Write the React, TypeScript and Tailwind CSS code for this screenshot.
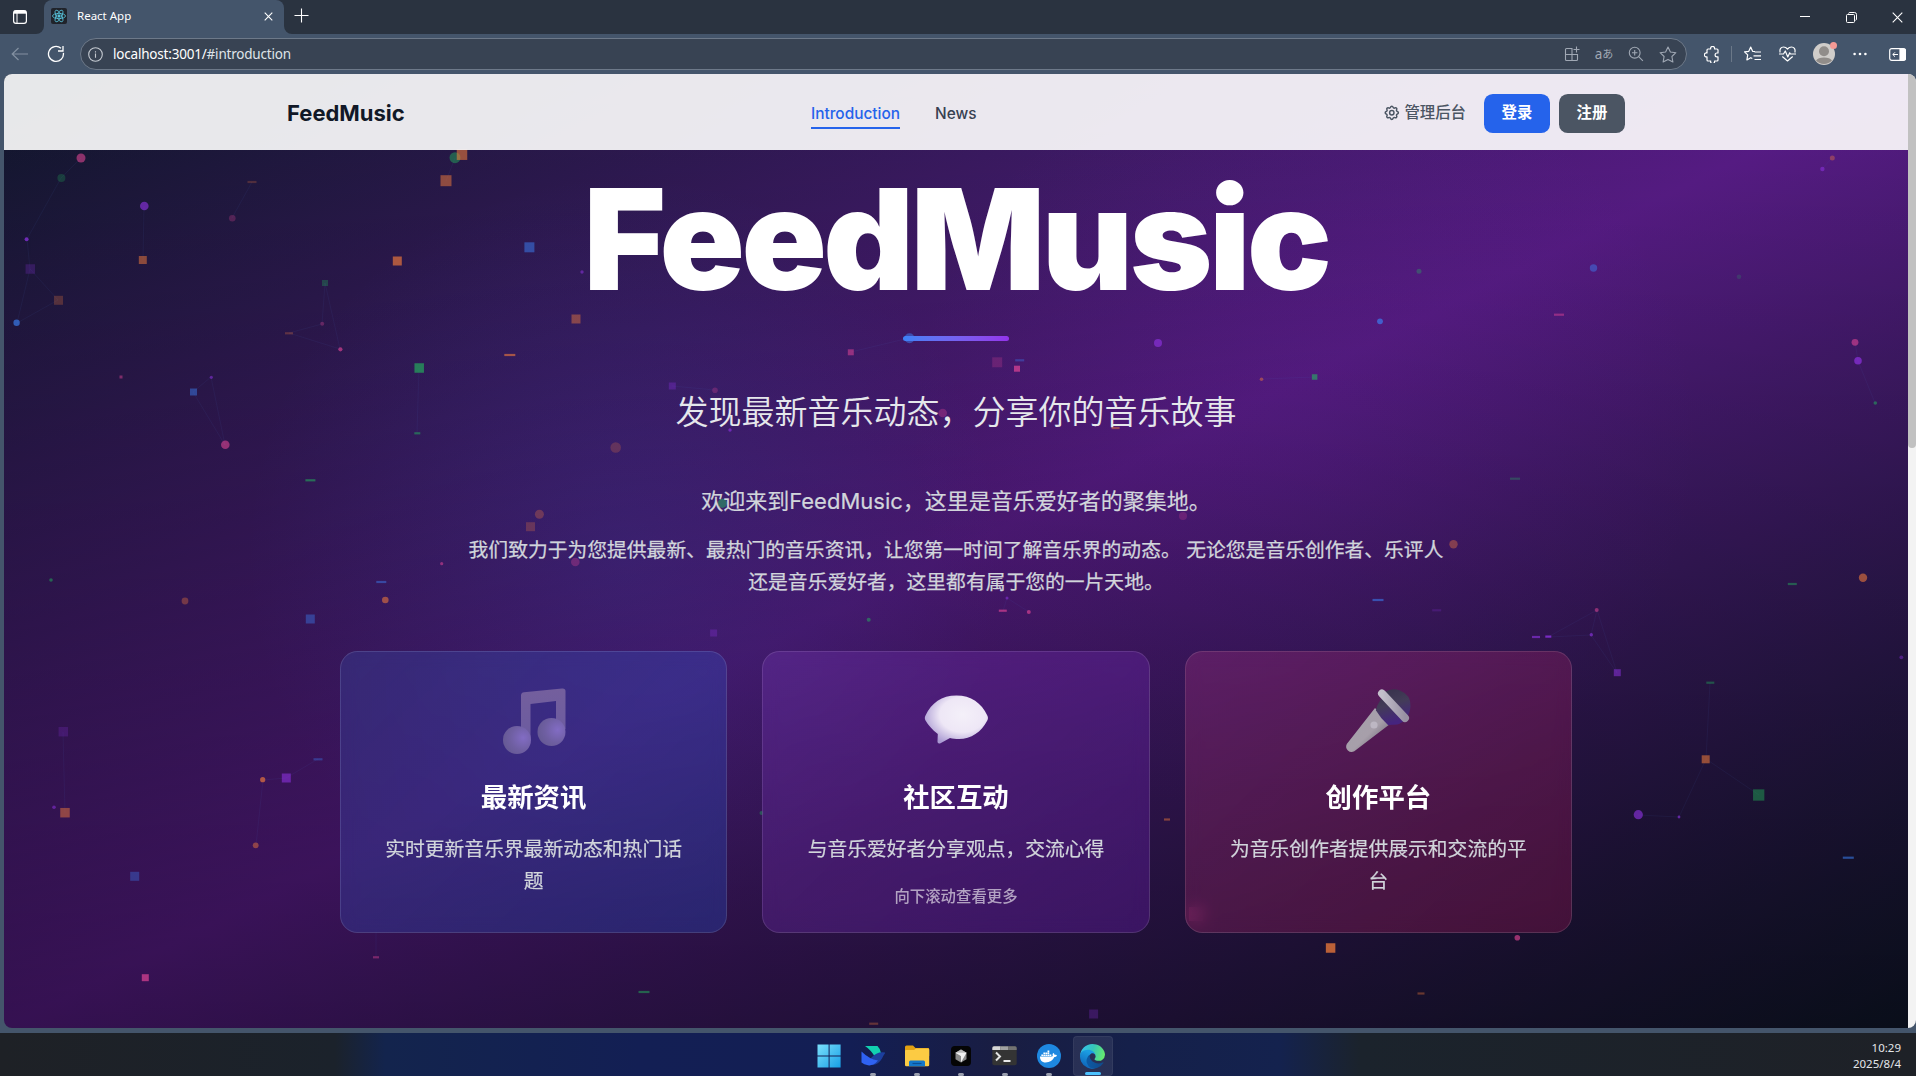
import React from "react";
import { FaDocker } from "react-icons/fa";
import { HiOutlineCog } from "react-icons/hi";

type Shape = "c" | "s" | "d";
type Particle = [Shape, number, number, number, keyof typeof palette, number];

const palette = {
  pink: "#ec4899",
  green: "#22c55e",
  purple: "#9333ea",
  orange: "#f97f3a",
  blue: "#3b82f6",
};

/* shape (circle, square, dash), centre x, centre y, radius or width, colour, opacity */
const particles: Particle[] = [
  ["c", 81, 158, 4.5, "pink", 0.55],
  ["c", 61.4, 178, 4, "green", 0.25],
  ["c", 144.3, 206, 4.3, "purple", 0.6],
  ["d", 252, 182, 9, "orange", 0.25],
  ["c", 232.3, 218.3, 3.3, "pink", 0.25],
  ["c", 455, 157.7, 5.5, "green", 0.45],
  ["s", 462, 154.7, 10.5, "orange", 0.6],
  ["s", 446, 180.7, 11, "orange", 0.55],
  ["c", 26.6, 239.3, 2, "purple", 0.7],
  ["s", 30.3, 269, 9.5, "purple", 0.22],
  ["s", 142.8, 260, 8, "orange", 0.55],
  ["s", 58.5, 300.3, 9, "orange", 0.28],
  ["c", 16.6, 322.7, 3.2, "blue", 0.65],
  ["s", 397.3, 261, 9, "orange", 0.7],
  ["s", 529.4, 247.3, 10, "blue", 0.5],
  ["s", 325, 283, 6, "green", 0.3],
  ["c", 322.2, 323.7, 2, "pink", 0.3],
  ["d", 289, 333.3, 8, "orange", 0.3],
  ["c", 340.4, 349.3, 2.1, "pink", 0.6],
  ["s", 576, 319, 9, "orange", 0.48],
  ["d", 509.8, 355, 11, "orange", 0.65],
  ["s", 419.2, 368, 9.5, "green", 0.65],
  ["s", 121, 377, 3, "pink", 0.45],
  ["c", 211.3, 377.3, 1.6, "purple", 0.5],
  ["s", 193.5, 392, 7, "blue", 0.45],
  ["d", 417.3, 433.3, 6, "green", 0.5],
  ["c", 225.3, 444.7, 4.3, "pink", 0.55],
  ["d", 310.4, 480.3, 10, "green", 0.55],
  ["c", 539.4, 514.3, 4.5, "orange", 0.32],
  ["s", 530.5, 526.7, 9, "orange", 0.28],
  ["c", 441.7, 563.7, 1.6, "pink", 0.5],
  ["c", 575.3, 562, 4.3, "pink", 0.3],
  ["c", 51, 580, 1.8, "green", 0.5],
  ["s", 850.8, 352.3, 6, "pink", 0.5],
  ["c", 909.5, 338.3, 5, "blue", 0.5],
  ["s", 997.2, 362.3, 10, "pink", 0.22],
  ["d", 1019.7, 360.3, 9, "blue", 0.35],
  ["s", 1017, 368.7, 6, "pink", 0.65],
  ["c", 1158, 343, 4, "purple", 0.6],
  ["s", 1314.6, 377, 5.5, "green", 0.6],
  ["c", 1261.5, 379.3, 1.8, "orange", 0.5],
  ["c", 582, 272, 1.7, "purple", 0.5],
  ["s", 672.3, 386, 7, "purple", 0.3],
  ["c", 715, 390.3, 2.8, "pink", 0.25],
  ["c", 615.7, 447.5, 5.3, "orange", 0.25],
  ["c", 942.7, 413, 4.3, "pink", 0.3],
  ["d", 1115.6, 428, 8, "orange", 0.5],
  ["c", 730, 430, 1.7, "purple", 0.6],
  ["c", 722.4, 503.3, 4.6, "green", 0.5],
  ["c", 1183, 516, 4, "pink", 0.22],
  ["c", 1453.5, 544.3, 4.2, "orange", 0.42],
  ["d", 1378, 600, 11, "blue", 0.55],
  ["d", 1436.7, 610.3, 9, "purple", 0.2],
  ["d", 1002.8, 610.7, 8, "pink", 0.6],
  ["c", 1028.8, 612, 2, "pink", 0.6],
  ["c", 1007, 598, 1.5, "purple", 0.5],
  ["c", 868.7, 619.7, 2, "green", 0.5],
  ["c", 817, 553, 2, "orange", 0.4],
  ["s", 713.6, 633, 7, "purple", 0.28],
  ["c", 1832.3, 158, 2.5, "orange", 0.4],
  ["c", 1822.4, 169, 2.2, "purple", 0.5],
  ["c", 1419, 271.3, 2.5, "green", 0.35],
  ["c", 1593.5, 268, 3.7, "blue", 0.45],
  ["c", 1380, 321.3, 2.9, "blue", 0.65],
  ["d", 1559, 314.7, 10, "pink", 0.45],
  ["c", 1739, 276.7, 2.3, "green", 0.2],
  ["c", 1855, 342.3, 3.4, "pink", 0.55],
  ["c", 1858, 360.7, 3.8, "purple", 0.65],
  ["c", 1875.3, 403, 1.8, "green", 0.5],
  ["d", 1515, 478.7, 10, "green", 0.32],
  ["c", 1863, 577.7, 4.2, "orange", 0.62],
  ["c", 185, 601, 3.4, "orange", 0.38],
  ["c", 385.3, 600, 3.3, "orange", 0.6],
  ["d", 381.3, 582, 10, "blue", 0.45],
  ["s", 310.3, 619, 9, "blue", 0.4],
  ["s", 63.3, 731.7, 9.5, "purple", 0.2],
  ["c", 54, 807.3, 1.8, "purple", 0.5],
  ["s", 65, 812.7, 9.5, "orange", 0.52],
  ["s", 286.3, 778, 9, "purple", 0.55],
  ["c", 262.7, 779.7, 2.6, "orange", 0.7],
  ["d", 318, 759.3, 9, "blue", 0.35],
  ["c", 255.7, 845.3, 2.9, "orange", 0.5],
  ["s", 134.7, 876.3, 9, "blue", 0.35],
  ["d", 376, 957.3, 6, "pink", 0.4],
  ["s", 145.3, 977.7, 7, "pink", 0.65],
  ["d", 1792.3, 584, 9, "green", 0.45],
  ["c", 1596.7, 610, 2, "pink", 0.5],
  ["d", 1536, 637, 8, "purple", 0.6],
  ["d", 1548.3, 636.6, 6, "purple", 0.75],
  ["c", 1591.3, 634.7, 1.7, "purple", 0.6],
  ["s", 1617.3, 672.7, 7, "purple", 0.5],
  ["d", 1710.3, 682.7, 8, "green", 0.4],
  ["c", 1901.3, 657.3, 1.9, "purple", 0.4],
  ["s", 1705.7, 759.3, 8, "orange", 0.6],
  ["s", 1758.7, 795, 11.3, "green", 0.45],
  ["c", 1638.3, 814.7, 4.6, "purple", 0.6],
  ["c", 1679, 817, 1.4, "purple", 0.6],
  ["d", 1848.3, 857.7, 11, "blue", 0.55],
  ["c", 1517.3, 937.7, 2.8, "pink", 0.6],
  ["s", 1330.6, 948, 9.5, "orange", 0.8],
  ["d", 644, 992, 11, "green", 0.5],
  ["d", 873.7, 1023.7, 9, "orange", 0.35],
  ["s", 1093.6, 1014, 9, "purple", 0.25],
  ["d", 1421, 993.5, 7, "orange", 0.4],
  ["d", 1167, 819.5, 6, "orange", 0.5],
  ["c", 761.5, 813, 2, "green", 0.4],
  ["s", 1196, 914, 14, "pink", 0.28],
];

const links: [number, number, number, number][] = [
  [81, 158, 61, 178], [61, 178, 27, 239], [27, 239, 30, 269], [30, 269, 58, 300],
  [30, 269, 17, 323], [58, 300, 17, 323], [144, 206, 143, 260], [252, 182, 232, 218],
  [455, 158, 446, 181], [325, 283, 322, 324], [325, 283, 340, 349], [322, 324, 289, 333],
  [289, 333, 340, 349], [211, 377, 193, 392], [193, 392, 225, 445], [211, 377, 225, 445],
  [419, 368, 417, 433], [286, 778, 318, 759], [263, 780, 286, 778], [263, 780, 256, 845],
  [63, 732, 65, 813], [376, 957, 376, 930], [851, 352, 909, 338], [672, 386, 715, 390],
  [1262, 379, 1315, 377], [1003, 611, 1007, 598], [1007, 598, 1029, 612],
  [1832, 158, 1822, 169], [1855, 342, 1858, 361], [1858, 361, 1875, 403],
  [1548, 637, 1591, 635], [1591, 635, 1597, 610], [1597, 610, 1548, 637],
  [1591, 635, 1617, 673], [1597, 610, 1617, 673], [1706, 759, 1759, 795],
  [1706, 759, 1679, 817], [1638, 815, 1679, 817], [1710, 683, 1706, 759],
];

function ParticleField() {
  return (
    <svg className="pointer-events-none absolute inset-0 h-full w-full" viewBox="4 74 1904 954">
      {links.map(([a, b, c, d], i) => (
        <line key={i} x1={a} y1={b} x2={c} y2={d} stroke="#4f7bd9" strokeWidth="0.8" opacity="0.09" />
      ))}
      {particles.map(([shape, x, y, s, color, o], i) => {
        const fade = color === "orange" || color === "green" ? o * 0.9 : o;
        if (shape === "c") return <circle key={i} cx={x} cy={y} r={s} fill={palette[color]} opacity={fade} />;
        const h = shape === "s" ? s : 2.2;
        return <rect key={i} x={x - s / 2} y={y - h / 2} width={s} height={h} fill={palette[color]} opacity={fade} />;
      })}
    </svg>
  );
}

function TitleBar() {
  return (
    <div className="flex h-[34px] shrink-0 items-stretch bg-[#2a3340] text-white">
      <div className="flex w-[44px] items-center pl-[13px]">
        <svg width="14" height="14" viewBox="0 0 14 14" fill="none" stroke="white" strokeWidth="1.2">
          <rect x="0.6" y="0.6" width="12.8" height="12.8" rx="2.4" />
          <path d="M1 2.2h12" strokeWidth="3" />
          <path d="M4 3v10" strokeWidth="1" />
        </svg>
      </div>
      <div className="relative flex w-[240px] items-center rounded-t-[8px] bg-[#44556b] pb-0.5 pl-[7px] pr-[11px]">
        <svg className="absolute -left-2 bottom-0" width="8" height="8" viewBox="0 0 8 8">
          <path d="M8 0v8H0A8 8 0 0 0 8 0z" fill="#44556b" />
        </svg>
        <svg className="absolute -right-2 bottom-0" width="8" height="8" viewBox="0 0 8 8">
          <path d="M0 0v8h8A8 8 0 0 1 0 0z" fill="#44556b" />
        </svg>
        <svg width="16" height="16" viewBox="0 0 16 16" fill="none" stroke="#58c4dc" strokeWidth="0.8">
          <rect width="16" height="16" rx="2" fill="#20232a" stroke="none" />
          <circle cx="8" cy="8" r="1.2" fill="#58c4dc" />
          <ellipse cx="8" cy="8" rx="6.5" ry="2.6" />
          <ellipse cx="8" cy="8" rx="6.5" ry="2.6" transform="rotate(60 8 8)" />
          <ellipse cx="8" cy="8" rx="6.5" ry="2.6" transform="rotate(120 8 8)" />
        </svg>
        <span className="ml-[10px] flex-1 text-[11.5px] leading-4">React App</span>
        <svg width="9" height="9" viewBox="0 0 9 9" stroke="white" strokeWidth="1.1">
          <path d="M.7.7l7.6 7.6M8.3.7L.7 8.3" />
        </svg>
      </div>
      <div className="flex flex-1 items-center pb-[3px] pl-[10px]">
        <svg width="15" height="15" viewBox="0 0 15 15" stroke="white" strokeWidth="1.1">
          <path d="M7.5.5v14M.5 7.5h14" />
        </svg>
      </div>
      <div className="flex items-center gap-[35.5px] pr-[13px]">
        <svg width="10" height="10" viewBox="0 0 10 10" stroke="white">
          <path d="M0 4.5h10" />
        </svg>
        <svg width="11" height="11" viewBox="0 0 11 11" fill="none" stroke="white">
          <rect x=".5" y="2.5" width="8" height="8" rx="1" />
          <path d="M2.5 1.5q.2-1 1.4-1H8.5q2 0 2 2V7q0 1-1 1.4" />
        </svg>
        <svg width="11" height="11" viewBox="0 0 11 11" stroke="white" strokeWidth="1.1">
          <path d="M.7.7l9.6 9.6M10.3.7L.7 10.3" />
        </svg>
      </div>
    </div>
  );
}

function Toolbar() {
  return (
    <div className="flex h-[40px] shrink-0 items-center bg-[#44556b] pl-[11px] pr-[10px] text-white">
      <svg width="18" height="14" viewBox="0 0 18 14" fill="none" stroke="#8390a1" strokeWidth="1.2">
        <path d="M17 7H1.5M7.500 1L1.200 7l6.300 6" />
      </svg>
      <svg className="ml-[18px]" width="18" height="18" viewBox="0 0 18 18" fill="none" stroke="white" strokeWidth="1.3">
        <path d="M16.4 7.8A7.5 7.5 0 1 1 14 3.3M16 1v5h-5" />
      </svg>
      <div className="ml-[15px] flex h-8 flex-1 items-center rounded-full border border-[#6d7989] bg-[#384353] pl-[7px] pr-[9px]">
        <svg width="15" height="15" viewBox="0 0 15 15" fill="none" stroke="#c5cad1" strokeWidth="1.1">
          <circle cx="7.5" cy="7.5" r="6.8" />
          <path d="M7.5 6.6v4.2M7.5 4.2v1.3" />
        </svg>
        <span className="ml-[10px] flex-1 text-[13.5px] leading-5 tracking-[-0.2px]">
          localhost:3001/<span className="text-[#dfe3e8]">#introduction</span>
        </span>
        <div className="flex items-center gap-[15px] text-[#a0a8b4]">
          <svg width="16" height="16" viewBox="0 0 16 16" fill="none" stroke="currentColor" strokeWidth="1.1">
            <path d="M8.500 2.500H2.500q-1 0-1 1v10q0 1 1 1h10q1 0 1-1V8.500H1.500M8 2.500v12M12.500 .5v6M9.500 3.500h6" />
          </svg>
          <span className="flex w-[18px] items-center justify-center whitespace-nowrap text-[13.5px] leading-4">
            a<span className="text-[11px]">あ</span>
          </span>
          <svg width="16" height="16" viewBox="0 0 16 16" fill="none" stroke="currentColor" strokeWidth="1.1">
            <circle cx="6.7" cy="6.7" r="5.4" />
            <path d="M10.7 10.7l4.2 4.2M6.7 4v5.4M4 6.7h5.4" />
          </svg>
          <svg width="18" height="17" viewBox="0 0 18 17" fill="none" stroke="currentColor" strokeWidth="1.1" strokeLinejoin="round">
            <path d="M9 1l2.4 5 5.5.7-4 3.8 1 5.5L9 13.4 4.100 16l1-5.500-4-3.800 5.500-.7z" />
          </svg>
        </div>
      </div>
      <svg className="ml-[17px]" width="16" height="17" viewBox="0 0 16 17" fill="none" stroke="white" strokeWidth="1.2" strokeLinejoin="round">
        <path d="M4 3h2.700a2 2 0 1 1 3.800 0H13q1 0 1 1v3h-1a1.900 1.900 0 1 0 0 3.800h1V14q0 1-1 1h-2.500a2 2 0 1 1-3.800 0H4q-1 0-1-1v-3.200a2 2 0 1 1 0-3.800V4q0-1 1-1z" />
      </svg>
      <div className="ml-[11px] h-4 w-px bg-[#6b7888]" />
      <svg className="ml-[12px]" width="17" height="17" viewBox="0 0 17 17" fill="none" stroke="white" strokeWidth="1.2" strokeLinejoin="round">
        <path d="M11 5.500l-2.400-.2L6.700 1 4.800 5.300l-4.300.6 3.200 3-.8 5 3.800-2.200 1.600.9M10.500 6H17M9.500 9.800H17M10.500 13.500H17" />
      </svg>
      <svg className="ml-[18px]" width="17" height="16" viewBox="0 0 17 16" fill="none" stroke="white" strokeWidth="1.2" strokeLinejoin="round">
        <path d="M1.200 6.500C.2 3 2.200 1 4.500 1c1.700 0 3 .8 4 2 1-1.200 2.300-2 4-2 2.300 0 4.300 2 3.300 5.500M3.300 10.500L8.500 15l5.200-4.500M0 8h4.500l1.800-3 2.500 6 1.900-4.200.8 1.200H17" />
      </svg>
      <div className="relative ml-[17px] h-[22px] w-[22px]">
        <svg width="22" height="22" viewBox="0 0 22 22">
          <circle cx="11" cy="11" r="11" fill="#d0cdca" />
          <circle cx="11" cy="8.200" r="5" fill="#918d8a" />
          <path d="M3 17.500q2-3 8-3t8 3a11 11 0 0 1-16 0z" fill="#918d8a" />
        </svg>
        <div className="absolute -right-[2px] -top-[1px] h-[7px] w-[7px] rounded-full bg-[#f59a95]" />
      </div>
      <svg className="ml-[18px]" width="14" height="4" viewBox="0 0 14 4" fill="white">
        <circle cx="1.600" cy="2" r="1.300" />
        <circle cx="7" cy="2" r="1.300" />
        <circle cx="12.400" cy="2" r="1.300" />
      </svg>
      <svg className="ml-[22px]" width="17" height="13" viewBox="0 0 17 13" fill="none" stroke="white" strokeWidth="1.200">
        <rect x=".7" y=".7" width="15.600" height="11.600" rx="2" />
        <path d="M11 1h4q1.500 0 1.500 1.500v8Q16.500 12 15 12h-4z" fill="white" />
        <path d="M9 6.500H4M6 4.300L3.800 6.500 6 8.700" strokeWidth="1" />
      </svg>
    </div>
  );
}

function SiteHeader() {
  return (
    <header className="relative z-10 h-[76px] bg-white/90 pt-[2px]">
      <div className="mx-auto flex h-full w-[1338px] items-center justify-between">
        <div className="w-[524px] text-[22px] font-bold text-[#111827]">FeedMusic</div>
        <nav className="flex flex-1 gap-[35px] text-[15.4px] font-medium leading-[22px]">
          <a className="border-b-2 border-[#2563eb] pb-[2px] pt-[6px] text-[#2563eb]">Introduction</a>
          <a className="pb-[4px] pt-[6px] text-[#374151]">News</a>
        </nav>
        <div className="flex items-center text-[15.4px]">
          <span className="flex items-center gap-[4px] font-medium text-[#4b5563]">
            <HiOutlineCog size={17.6} />
            管理后台
          </span>
          <button className="ml-[18px] h-[39px] w-[66px] rounded-[8.8px] bg-[#2563eb] font-bold text-white">登录</button>
          <button className="ml-[9px] h-[39px] w-[66px] rounded-[8.8px] bg-[#4b5563] font-bold text-white">注册</button>
        </div>
      </div>
    </header>
  );
}

function MusicNote() {
  return (
    <svg width="66" height="70" viewBox="0 0 66 70">
      <defs>
        <radialGradient id="noteA" cx="0.72" cy="0.42" r="0.75">
          <stop offset="0" stopColor="#826cc4" />
          <stop offset="0.6" stopColor="#6f5fa2" />
          <stop offset="1" stopColor="#655993" />
        </radialGradient>
        <linearGradient id="noteB" x1="0" y1="0" x2="0" y2="1">
          <stop offset="0" stopColor="#745f9d" />
          <stop offset="1" stopColor="#6b5ba0" />
        </linearGradient>
      </defs>
      <path d="M20 8.500q0-3 3-3.300L61 1.500q3.500-.3 3.500 2.500V42H55V14L29.500 17v36H20z" fill="url(#noteB)" />
      <circle cx="16" cy="53" r="14" fill="url(#noteA)" />
      <circle cx="50.500" cy="45" r="14" fill="url(#noteA)" />
    </svg>
  );
}

function SpeechBubble() {
  return (
    <svg width="66" height="70" viewBox="0 0 66 70">
      <defs>
        <radialGradient id="bubble" cx="0.6" cy="0.4" r="0.66">
          <stop offset="0" stopColor="#f4f0f9" />
          <stop offset="0.55" stopColor="#eee7f6" />
          <stop offset="1" stopColor="#a999d2" />
        </radialGradient>
      </defs>
      <path
        d="M33.500 8.500C48 8.500 58.500 16 64.300 28.500c.9 2 .9 3 0 5C58.500 45 48 52 36 52c-3.500 0-6.500-.3-9-1l-9.500 5.300c-2 .8-3.200 0-3-2.200l.3-7.100C9 42.500 5.300 38 2.500 33.500c-.9-2-.9-3 0-5C8.500 16 18.500 8.500 33.500 8.500z"
        fill="url(#bubble)"
      />
    </svg>
  );
}

function Microphone() {
  return (
    <svg width="66" height="70" viewBox="0 0 66 70">
      <defs>
        <linearGradient id="micBody" x1="0" y1="0" x2="1" y2="1">
          <stop offset="0.2" stopColor="#a5a0ab" />
          <stop offset="0.55" stopColor="#a79faa" />
          <stop offset="0.8" stopColor="#77707f" />
        </linearGradient>
        <linearGradient id="micBall" x1="0" y1="0" x2="0.3" y2="1">
          <stop offset="0" stopColor="#35304a" />
          <stop offset="0.5" stopColor="#433c58" />
          <stop offset="1" stopColor="#45247f" />
        </linearGradient>
        <linearGradient id="micRing" x1="0" y1="0" x2="1" y2="0">
          <stop offset="0" stopColor="#c3bfcb" />
          <stop offset="1" stopColor="#9891a3" />
        </linearGradient>
      </defs>
      <path d="M30 21L1.800 57a5.500 5.500 0 0 0 7.500 7.300L45 37z" fill="url(#micBody)" />
      <circle cx="29" cy="38" r="3.600" fill="#bdb7c3" />
      <path d="M32 19L40 5q7-4.500 15-1.500Q66 8 65.500 19q-1 14-13 18.500L43 38q-7-6-12-14.500z" fill="url(#micBall)" />
      <path d="M37 6.500L60 31" stroke="url(#micRing)" strokeWidth="8" strokeLinecap="round" />
    </svg>
  );
}

const cards = [
  {
    icon: <MusicNote />,
    title: "最新资讯",
    text: "实时更新音乐界最新动态和热门话题",
    className: "bg-[linear-gradient(135deg,rgba(59,130,246,0.17),rgba(37,99,235,0.25))]",
  },
  {
    icon: <SpeechBubble />,
    title: "社区互动",
    text: "与音乐爱好者分享观点，交流心得",
    className: "bg-[linear-gradient(135deg,rgba(168,85,247,0.18),rgba(126,34,206,0.28))]",
  },
  {
    icon: <Microphone />,
    title: "创作平台",
    text: "为音乐创作者提供展示和交流的平台",
    className: "bg-[linear-gradient(135deg,rgba(236,72,153,0.2),rgba(190,24,93,0.27))]",
  },
];

function Hero() {
  return (
    <main className="relative flex flex-col items-center text-center">
      <h1 className="mt-[19px] text-[140.8px] font-black leading-[140.8px] tracking-[-0.025em] text-white">FeedMusic</h1>
      <div className="mt-[26px] h-[5px] w-[106px] rounded-full bg-linear-to-r from-[#3b82f6] to-[#9333ea]" />
      <p className="mt-[49px] text-[33px] font-[350] leading-[45px] text-[#e5e7eb]">发现最新音乐动态，分享你的音乐故事</p>
      <p className="mt-[48px] text-[22px] leading-[36px] text-[#d1d5db] [-webkit-text-stroke:0.2px_#d1d5db]">
        欢迎来到FeedMusic，这里是音乐爱好者的聚集地。
      </p>
      <p className="mt-[15px] text-[19.8px] leading-[32.2px] text-[#d1d5db] [-webkit-text-stroke:0.25px_#d1d5db]">
        我们致力于为您提供最新、最热门的音乐资讯，让您第一时间了解音乐界的动态。 无论您是音乐创作者、乐评人
        <br />
        还是音乐爱好者，这里都有属于您的一片天地。
      </p>
      <div className="relative mt-[53px] grid w-[1232px] grid-cols-3 gap-[35.2px]">
        {cards.map((card) => (
          <section
            key={card.title}
            className={`flex h-[282px] flex-col items-center rounded-[17.6px] border border-white/12 px-[35px] pt-[35px] backdrop-blur-[8px] ${card.className}`}
          >
            <div className="flex h-[70px] items-center">{card.icon}</div>
            <h2 className="mt-[23px] text-[26.4px] font-bold leading-[35px] text-white">{card.title}</h2>
            <p className="mt-[18px] text-[19.8px] leading-[32.2px] text-[#d1d5db] [-webkit-text-stroke:0.2px_#d1d5db]">
              {card.text}
            </p>
          </section>
        ))}
        <div className="absolute inset-x-0 bottom-[25px] text-[15.4px] font-medium leading-[22px] text-white/60">向下滚动查看更多</div>
      </div>
    </main>
  );
}

function Page() {
  return (
    <div className="flex h-[959px] shrink-0 bg-[#44556b] pb-[5px] pl-1">
      <div className="relative w-[1904px] overflow-hidden rounded-l-[8px] bg-[linear-gradient(to_bottom,rgba(0,0,0,0),rgba(0,0,0,0.4)),radial-gradient(circle_at_620px_480px,rgba(59,110,246,0.15),transparent_380px),radial-gradient(circle_at_1300px_360px,rgba(147,51,234,0.09),transparent_400px),linear-gradient(to_bottom_right,#0f172a,#581c87,#0f172a)]">
        <ParticleField />
        <SiteHeader />
        <Hero />
      </div>
      <div className="flex-1 overflow-hidden rounded-r-[8px] bg-[#f3f3f3]">
        <div className="h-[374px] rounded-b-[4px] bg-[#c1c1c1]" />
      </div>
    </div>
  );
}

function WindowsLogo() {
  return (
    <svg width="24" height="24" viewBox="0 0 24 24">
      <defs>
        <linearGradient id="win" x1="0" y1="0" x2="1" y2="1">
          <stop offset="0" stopColor="#7be0fb" />
          <stop offset="1" stopColor="#179fe6" />
        </linearGradient>
      </defs>
      <path d="M.5.5h11.100v11.100H.5zM12.600.5h11v11.100h-11zM.5 12.500h11.100v11H.5zM12.600 12.500h11v11h-11z" fill="url(#win)" />
    </svg>
  );
}

function LarkLogo() {
  return (
    <svg width="24" height="24" viewBox="0 0 24 24">
      <path d="M4 2h12.500q3 3 3.500 7l-6 4Q10 6 4 2z" fill="#12d0b0" />
      <path d="M10 14q6-7 14.500-5.500-2 2.500-3.500 6-3.500 6-10 6.500z" fill="#1c3f9e" />
      <path d="M.5 7.500Q8 15 17 16.500q-4.500 5.500-10 4.800Q3 20.700.5 18.500z" fill="#2f62f2" />
    </svg>
  );
}

function FolderLogo() {
  return (
    <svg width="26" height="24" viewBox="0 0 26 24">
      <path d="M1 3q0-1.500 1.500-1.500H9l2.500 2.500H24q1.200 0 1.200 1.200V12H1z" fill="#e3a112" />
      <path d="M1 7q0-1 1-1h8l2-1.500h12q1.200 0 1.200 1.200V21q0 1.200-1.200 1.200H2.200Q1 22.200 1 21z" fill="#fccb43" />
      <path d="M5 22.200V18q0-1.500 1.500-1.500h13q1.500 0 1.500 1.500v4.200z" fill="#1477c9" />
      <path d="M8.500 19.500h9" stroke="#0b4f94" strokeWidth="1.200" />
    </svg>
  );
}

function CubeLogo() {
  return (
    <svg width="20" height="20" viewBox="0 0 20 20">
      <rect width="20" height="20" rx="4" fill="#050505" />
      <path d="M10 3.500l5.500 3.200v6.600L10 16.500l-5.500-3.200V6.700z" fill="#8a8a8a" />
      <path d="M4.500 6.700L10 3.500l5.500 3.200L10 10z" fill="#bcbcbc" />
      <path d="M4.500 6.700h11L10 16.500V10z" fill="#f2f2f2" />
    </svg>
  );
}

function TerminalLogo() {
  return (
    <svg width="25" height="20" viewBox="0 0 25 20">
      <rect x=".3" y=".3" width="24.400" height="19" rx="1.800" fill="#343434" />
      <path d="M.3 4V2Q.3.300 2 .3h6.500V4z" fill="#d6d6d6" />
      <path d="M8.500.300h8V4h-8z" fill="#a2a2a2" />
      <path d="M16.500.300H23q1.700 0 1.700 1.700v2h-8.200z" fill="#737373" />
      <path d="M4 6.500l4 4-4 4" fill="none" stroke="#e4e4e4" strokeWidth="2" />
      <path d="M11.500 15h7" stroke="white" strokeWidth="1.800" />
    </svg>
  );
}

function EdgeLogo() {
  return (
    <svg width="25" height="25" viewBox="0 0 256 256">
      <defs>
        <linearGradient id="edgeBase" x1="0.1" y1="0.5" x2="1" y2="0.6">
          <stop offset="0" stopColor="#0c59a4" />
          <stop offset="1" stopColor="#114a8b" />
        </linearGradient>
        <linearGradient id="edgeMid" x1="0.6" y1="0.2" x2="0.3" y2="1">
          <stop offset="0" stopColor="#1b9de2" />
          <stop offset="1" stopColor="#0d5fb6" />
        </linearGradient>
        <linearGradient id="edgeTop" x1="0" y1="0.3" x2="1" y2="0.5">
          <stop offset="0" stopColor="#35c1f1" />
          <stop offset="0.5" stopColor="#36c6b8" />
          <stop offset="1" stopColor="#66eb6e" />
        </linearGradient>
      </defs>
      <path d="M235 188a94 94 0 0 1-11 5 102 102 0 0 1-36 6c-47 0-89-33-89-75a32 32 0 0 1 17-27c-43 2-54 47-54 73 0 74 68 82 83 82 8 0 20-2 27-5h2a128 128 0 0 0 66-53c2-4-2-8-5-6z" fill="url(#edgeBase)" />
      <path d="M106 241a79 79 0 0 1-23-21 81 81 0 0 1 30-121c3-2 8-4 15-4a32 32 0 0 1 25 13 32 32 0 0 1 6 18c0-1 25-79-80-79-44 0-80 42-79 78a130 130 0 0 0 12 56 128 128 0 0 0 156 67 75 75 0 0 1-62-7z" fill="url(#edgeMid)" />
      <path d="M152 149c-1 1-3 2-3 6 0 3 2 5 5 8 14 10 42 9 42 9a60 60 0 0 0 30-9 61 61 0 0 0 30-52c0-22-8-37-11-43C225 28 182 0 128 0A128 128 0 0 0 0 126c0-37 36-66 80-66 4 0 24 0 42 10 16 8 25 19 31 29 6 11 7 24 7 29s-3 14-8 21z" fill="url(#edgeTop)" />
    </svg>
  );
}

const apps = [
  { name: "start", icon: <WindowsLogo />, mark: "bg-transparent" },
  { name: "lark", icon: <LarkLogo />, mark: "w-[6px] bg-[#9a9fae]" },
  { name: "files", icon: <FolderLogo />, mark: "w-[6px] bg-[#9a9fae]" },
  { name: "editor", icon: <CubeLogo />, mark: "w-[6px] bg-[#9a9fae]" },
  { name: "terminal", icon: <TerminalLogo />, mark: "w-[6px] bg-[#9a9fae]" },
  {
    name: "docker",
    icon: (
      <span className="flex h-[24px] w-[24px] items-center justify-center rounded-full bg-[#1e88e0] text-white">
        <FaDocker size={17} />
      </span>
    ),
    mark: "w-[6px] bg-[#9a9fae]",
  },
  { name: "edge", icon: <EdgeLogo />, mark: "w-[16px] bg-[#4cc2ff]" },
];

function Taskbar() {
  return (
    <div className="relative flex flex-1 items-start justify-center bg-[linear-gradient(to_right,#1e2126_0px,#1b222b_335px,#13244d_385px,#131f54_640px,#131e54_850px,#191d42_1000px,#15204a_1130px,#14224e_1280px,#1b232c_1360px,#1e2127_1916px)] pl-[5px] pt-[3px]">
      <div className="flex gap-1">
        {apps.map((app) => (
          <div
            key={app.name}
            className={`relative flex h-[40px] w-[40px] items-center justify-center rounded ${
              app.name === "edge" ? "border border-white/5 bg-white/8" : ""
            }`}
          >
            {app.icon}
            <span className={`absolute bottom-0 h-[3px] rounded-full ${app.mark}`} />
          </div>
        ))}
      </div>
      <div className="absolute right-[15px] top-[7px] text-right text-[11.5px] leading-[16px] text-[#e3e6ea]">
        <div>10:29</div>
        <div>2025/8/4</div>
      </div>
    </div>
  );
}

export default function App() {
  return (
    <div className="flex h-[1076px] w-[1916px] flex-col overflow-hidden bg-[#1e2126]">
      <div className="shrink-0 [font-family:'Noto_Sans','Noto_Sans_CJK_SC',sans-serif]">
        <TitleBar />
        <Toolbar />
      </div>
      <div className="shrink-0 [font-family:Inter,'Noto_Sans_CJK_SC',sans-serif]">
        <Page />
      </div>
      <div className="flex flex-1 [font-family:'Noto_Sans','Noto_Sans_CJK_SC',sans-serif]">
        <Taskbar />
      </div>
    </div>
  );
}
